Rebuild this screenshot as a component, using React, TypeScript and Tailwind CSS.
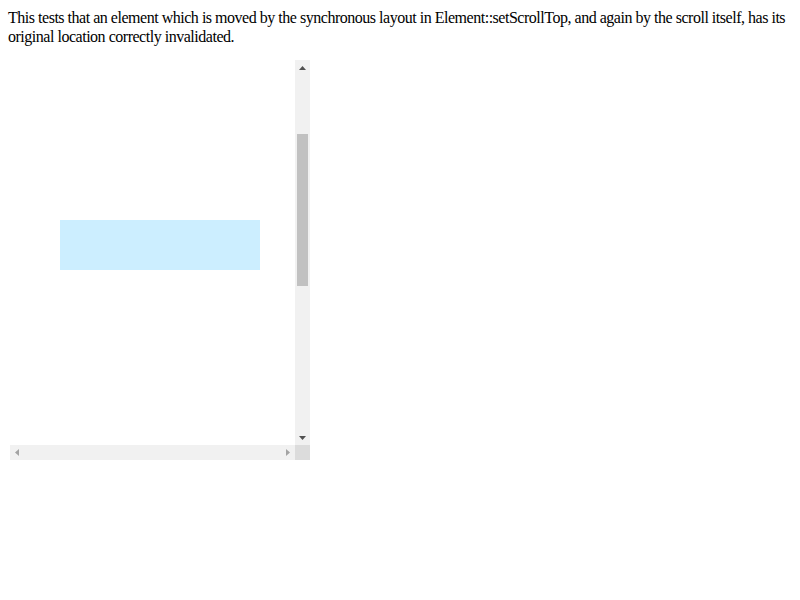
import React from "react";

export default function App() {
  return (
    <div className="font-['Liberation_Serif',serif] text-base text-black bg-white min-h-[600px]">
      <div className="px-2 pt-2 leading-[19px] tracking-[-0.48px]">
        This tests that an element which is moved by the synchronous layout in Element::setScrollTop, and again by the scroll itself, has its original location correctly invalidated.
      </div>
      <div className="ml-[10px] mt-[14px] w-[300px] h-[400px] flex flex-col">
        <div className="flex h-[385px]">
          <div className="w-[285px] h-full bg-white flex flex-col">
            <div className="h-[160px]" />
            <div className="ml-[50px] w-[200px] h-[50px] bg-[#cceeff]" />
          </div>
          <div className="w-[15px] h-full bg-[#f1f1f1] flex flex-col">
            <div className="h-[15px] flex items-center justify-center">
              <svg width="7" height="4" viewBox="0 0 7 4"><path d="M3.5 0 L7 4 L0 4 Z" fill="#505050" /></svg>
            </div>
            <div className="flex-1 flex flex-col px-[2px]">
              <div className="h-[59px]" />
              <div className="h-[152px] bg-[#c1c1c1]" />
            </div>
            <div className="h-[15px] flex items-center justify-center">
              <svg width="7" height="4" viewBox="0 0 7 4"><path d="M0 0 L7 0 L3.5 4 Z" fill="#505050" /></svg>
            </div>
          </div>
        </div>
        <div className="flex h-[15px]">
          <div className="w-[285px] h-full bg-[#f1f1f1] flex items-center justify-between px-[5px]">
            <svg width="4" height="7" viewBox="0 0 4 7"><path d="M4 0 L4 7 L0 3.5 Z" fill="#a3a3a3" /></svg>
            <svg width="4" height="7" viewBox="0 0 4 7"><path d="M0 0 L0 7 L4 3.5 Z" fill="#a3a3a3" /></svg>
          </div>
          <div className="w-[15px] h-full bg-[#dcdcdc]" />
        </div>
      </div>
    </div>
  );
}
